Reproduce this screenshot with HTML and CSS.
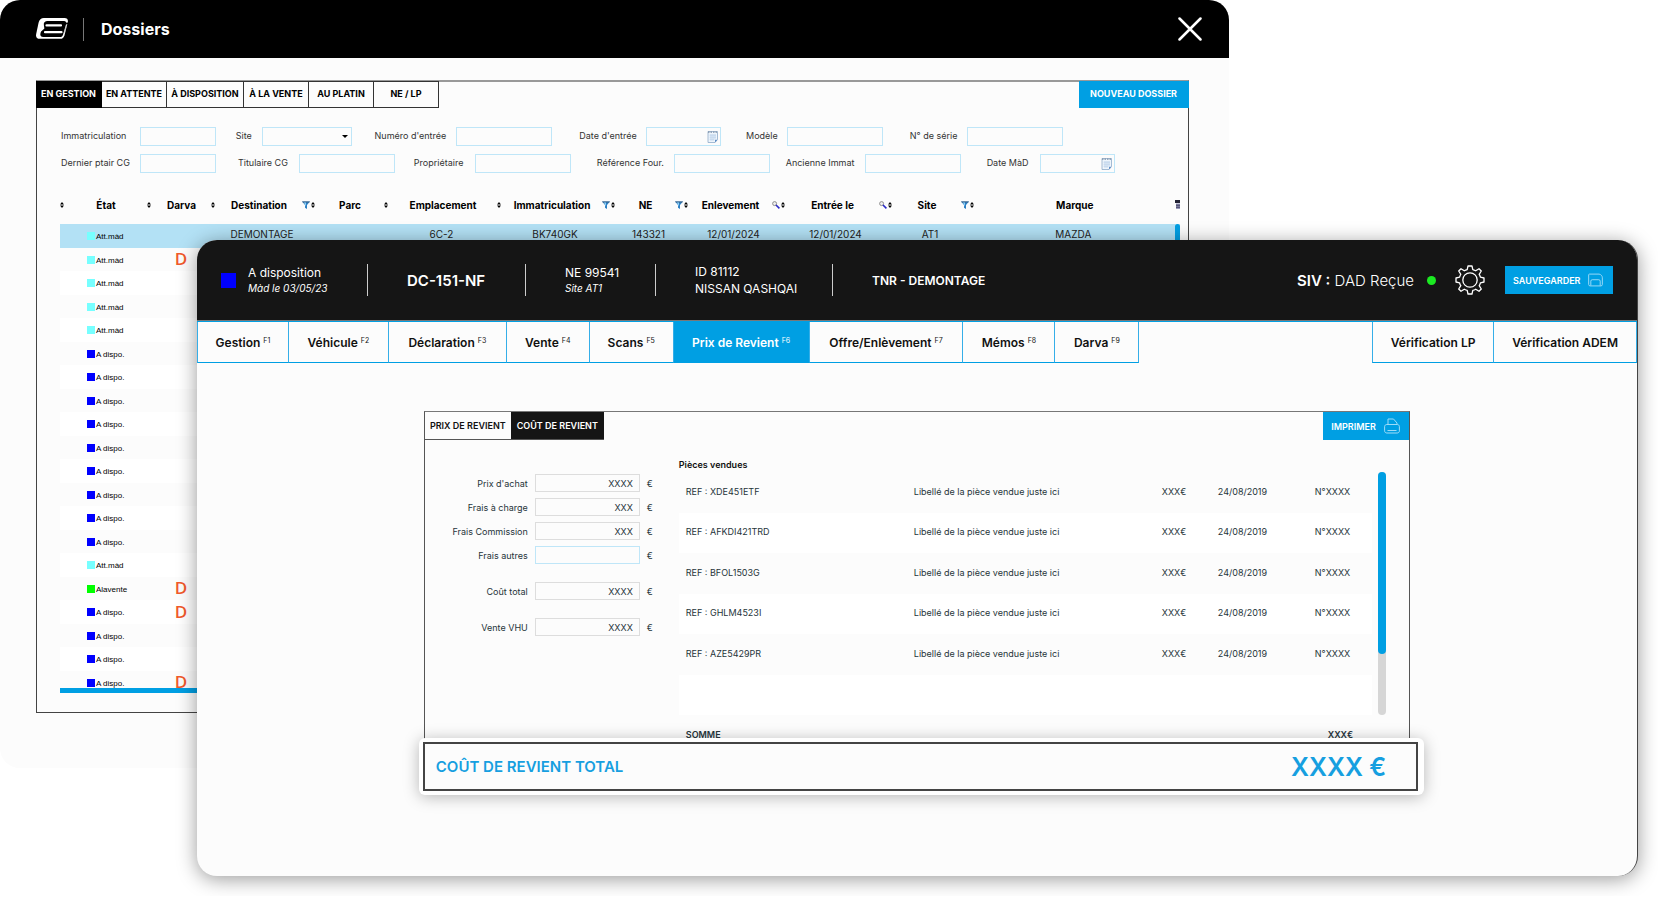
FILE: index.html
```html
<!DOCTYPE html>
<html lang="fr">
<head>
<meta charset="utf-8">
<title>Dossiers</title>
<link rel="stylesheet" href="styles.css">
</head>
<body>
<svg class="defs" aria-hidden="true">
  <symbol id="sort" viewBox="0 0 4 6"><path d="M2 0L4 2.4H0zM2 6L4 3.6H0z" fill="#000"/></symbol>
  <symbol id="funnel" viewBox="0 0 8 8"><path d="M0 .5h8L5 4v4L3 6.800V4z" fill="#2c7fc4"/><path d="M0 .5h8l-.8 1H.9z" fill="#3f5f7f"/><path d="M2 1.500h2v4z" fill="#8fd0f5"/></symbol>
  <symbol id="lens" viewBox="0 0 8 8"><circle cx="2.600" cy="2.600" r="2" fill="#eee" stroke="#777" stroke-width=".8"/><path d="M4 4l3.400 3.400" stroke="#2a2ac8" stroke-width="1.600"/></symbol>
  <symbol id="calendar" viewBox="0 0 11 13"><path d="M1 1.500h9.500v8l-2.500 3H1z" fill="#eef5fc" stroke="#8fabc9" stroke-width=".8"/><path d="M1 2.200h9.500" stroke="#7d8fa5" stroke-width="1.200" stroke-dasharray="1.500 1"/><path d="M2.500 5.200h6.500M2.500 7.200h6.500M2.500 9.200h5M4 4v7M6 4v7M8 4v5" stroke="#a5c3e2" stroke-width=".5"/><path d="M8 12.500V9.800h2.500z" fill="#5c8cc6"/></symbol>
</svg>
<main class="desktop">
  <section class="window list-window">
    <header class="list-header">
      <svg class="logo" viewBox="0 0 32 22"><path d="M8 0h20.500c2.700 0 3.800 1.500 3.300 4l-3.300 13.200c-.7 2.500-2 3.600-4.500 3.600H4C.8 20.800-.4 19 .2 16L2.500 5C3.300 1.500 5 0 8 0z" fill="#fff"/><path d="M11.500 3H27c1.800 0 3.500.5 3.800 2.300l1.200-1V6l-2 .5-3 10.200c-.5 1.700-1.500 2.300-3 2.300H7.500c-2.600 0-3.700-1.300-3-4.100.6-2.400 1.700-3.700 3.500-4.300-.9-.9-1-2.200-.6-4C8 4.200 9 3 11.500 3z" fill="#000"/><path d="M2 8l5.500-3L8.400 10.400 4 14.500z" fill="#fff"/><path d="M10.500 7.400H25M9 14.200h16.500" stroke="#fff" stroke-width="2.200" stroke-linecap="round"/><path d="M30.300 7.500l-1.800 7" stroke="#999" stroke-width=".6"/></svg>
      <span class="rule"></span>
      <h1>Dossiers</h1>
      <button class="close" aria-label="Fermer"><svg viewBox="0 0 24 24"><path d="M1.500 1.500l21 21M22.500 1.500l-21 21" stroke="#fff" stroke-width="2.500" stroke-linecap="round"/></svg></button>
    </header>
    <div class="list-panel">
      <div class="list-tabs">
        <nav class="tabs-dark">
          <button class="active">EN GESTION</button><button>EN ATTENTE</button><button class="wide">À DISPOSITION</button><button>À LA VENTE</button><button>AU PLATIN</button><button>NE / LP</button>
        </nav>
        <button class="new-file">NOUVEAU DOSSIER</button>
      </div>
      <form class="filters">
        <div class="filter-row first">
          <label for="immat">Immatriculation</label><input id="immat" class="w-s">
          <label for="site">Site</label><span class="select-box"><select id="site"><option></option></select></span>
          <label for="num">Numéro d'entrée</label><input id="num" class="w-l">
          <label for="dent">Date d'entrée</label><span class="date-box"><input id="dent"><svg><use href="#calendar"/></svg></span>
          <label for="mod">Modèle</label><input id="mod" class="w-l">
          <label for="serie">N° de série</label><input id="serie" class="w-l">
        </div>
        <div class="filter-row second">
          <label for="ptair">Dernier ptair CG</label><input id="ptair" class="w-s">
          <label for="titu">Titulaire CG</label><input id="titu" class="w-l">
          <label for="prop">Propriétaire</label><input id="prop" class="w-l">
          <label for="four">Référence Four.</label><input id="four" class="w-l">
          <label for="anc">Ancienne Immat</label><input id="anc" class="w-l">
          <label for="dmad">Date MàD</label><span class="date-box"><input id="dmad"><svg><use href="#calendar"/></svg></span>
        </div>
      </form>
      <div class="files">
        <table>
          <colgroup><col class="c-edge"><col class="c-etat"><col class="c-darva"><col class="c-dest"><col class="c-parc"><col class="c-empl"><col class="c-immat"><col class="c-ne"><col class="c-enl"><col class="c-ent"><col class="c-site"><col class="c-marq"></colgroup>
          <thead><tr>
            <th><div><svg class="sort"><use href="#sort"/></svg></div></th>
            <th><div><span>État</span><svg class="sort"><use href="#sort"/></svg></div></th>
            <th><div><span>Darva</span><svg class="sort"><use href="#sort"/></svg></div></th>
            <th><div><span>Destination</span><svg class="tool"><use href="#funnel"/></svg><svg class="sort"><use href="#sort"/></svg></div></th>
            <th><div><span>Parc</span><svg class="sort"><use href="#sort"/></svg></div></th>
            <th><div><span>Emplacement</span><svg class="sort"><use href="#sort"/></svg></div></th>
            <th><div><span>Immatriculation</span><svg class="tool"><use href="#funnel"/></svg><svg class="sort"><use href="#sort"/></svg></div></th>
            <th><div><span>NE</span><svg class="tool"><use href="#funnel"/></svg><svg class="sort"><use href="#sort"/></svg></div></th>
            <th><div><span>Enlevement</span><svg class="tool"><use href="#lens"/></svg><svg class="sort"><use href="#sort"/></svg></div></th>
            <th><div><span>Entrée le</span><svg class="tool"><use href="#lens"/></svg><svg class="sort"><use href="#sort"/></svg></div></th>
            <th><div><span>Site</span><svg class="tool"><use href="#funnel"/></svg><svg class="sort"><use href="#sort"/></svg></div></th>
            <th><div><span>Marque</span><svg class="menu" viewBox="0 0 5 9"><path d="M0 0h5v3H0z" fill="#223"/><path d="M1 3.500h4V9H1z" fill="#99b"/><path d="M1 5.200h4M1 7.200h4" stroke="#224" stroke-width=".8"/></svg></div></th>
          </tr></thead>
          <tbody>
            <tr class="selected"><td></td><td class="state wait">Att.màd</td><td></td><td>DEMONTAGE</td><td></td><td>6C-2</td><td>BK740GK</td><td>143321</td><td>12/01/2024</td><td>12/01/2024</td><td>AT1</td><td>MAZDA</td></tr>
            <tr><td></td><td class="state wait">Att.màd</td><td class="darva">D</td><td colspan="9"></td></tr>
            <tr><td></td><td class="state wait">Att.màd</td><td></td><td colspan="9"></td></tr>
            <tr><td></td><td class="state wait">Att.màd</td><td></td><td colspan="9"></td></tr>
            <tr><td></td><td class="state wait">Att.màd</td><td></td><td colspan="9"></td></tr>
            <tr><td></td><td class="state">A dispo.</td><td></td><td colspan="9"></td></tr>
            <tr><td></td><td class="state">A dispo.</td><td></td><td colspan="9"></td></tr>
            <tr><td></td><td class="state">A dispo.</td><td></td><td colspan="9"></td></tr>
            <tr><td></td><td class="state">A dispo.</td><td></td><td colspan="9"></td></tr>
            <tr><td></td><td class="state">A dispo.</td><td></td><td colspan="9"></td></tr>
            <tr><td></td><td class="state">A dispo.</td><td></td><td colspan="9"></td></tr>
            <tr><td></td><td class="state">A dispo.</td><td></td><td colspan="9"></td></tr>
            <tr><td></td><td class="state">A dispo.</td><td></td><td colspan="9"></td></tr>
            <tr><td></td><td class="state">A dispo.</td><td></td><td colspan="9"></td></tr>
            <tr><td></td><td class="state wait">Att.màd</td><td></td><td colspan="9"></td></tr>
            <tr><td></td><td class="state sale">Alavente</td><td class="darva">D</td><td colspan="9"></td></tr>
            <tr><td></td><td class="state">A dispo.</td><td class="darva">D</td><td colspan="9"></td></tr>
            <tr><td></td><td class="state">A dispo.</td><td></td><td colspan="9"></td></tr>
            <tr><td></td><td class="state">A dispo.</td><td></td><td colspan="9"></td></tr>
            <tr><td></td><td class="state">A dispo.</td><td class="darva">D</td><td colspan="9"></td></tr>
          </tbody>
        </table>
        <span class="files-scroll"></span>
      </div>
    </div>
  </section>

  <section class="window file-window">
    <header class="file-header">
      <span class="status-square"></span>
      <div class="info status"><p>A disposition</p><p class="sub">Màd le 03/05/23</p></div>
      <div class="info plate"><strong>DC-151-NF</strong></div>
      <div class="info entry"><p>NE 99541</p><p class="sub">Site AT1</p></div>
      <div class="info car"><p>ID 81112</p><p>NISSAN QASHQAI</p></div>
      <div class="info kind"><b>TNR - DEMONTAGE</b></div>
      <p class="siv"><b>SIV :</b> DAD Reçue</p>
      <span class="dot"></span>
      <button class="gear" aria-label="Réglages"><svg viewBox="0 0 30 30" fill="none" stroke="#fff" stroke-width="1.300" stroke-linejoin="round"><circle cx="15" cy="15" r="7.200"/><path d="M13 1h4l.8 3.600c1 .2 2 .7 2.900 1.200L24 3.700 26.300 6l-2.100 3.300c.6.900 1 1.900 1.200 2.900L29 13v4l-3.600.8c-.2 1-.7 2-1.200 2.900l2.100 3.300-2.300 2.300-3.300-2.100c-.9.600-1.900 1-2.900 1.200L17 29h-4l-.8-3.600c-1-.2-2-.7-2.900-1.200L6 26.300 3.700 24l2.100-3.300c-.6-.9-1-1.900-1.200-2.900L1 17v-4l3.600-.8c.2-1 .7-2 1.200-2.900L3.700 6 6 3.700l3.300 2.100c.9-.6 1.900-1 2.900-1.200z"/></svg></button>
      <button class="save">SAUVEGARDER <svg viewBox="0 0 16 14" fill="none" stroke="#9fdcf8"><path d="M1.500.7h10.300c2 .3 3.500 2 3.500 4v7.100c0 .9-.6 1.500-1.500 1.500H2.200c-.9 0-1.500-.6-1.500-1.500V1.500C.7 1 1 .7 1.500.7z"/><path d="M3 13V8.200c0-.9.600-1.500 1.500-1.500h7c.9 0 1.500.6 1.500 1.500V13"/></svg></button>
    </header>
    <nav class="file-tabs">
      <button>Gestion <sup>F1</sup></button><button>Véhicule <sup>F2</sup></button><button>Déclaration <sup>F3</sup></button><button>Vente <sup>F4</sup></button><button>Scans <sup>F5</sup></button><button class="active">Prix de Revient <sup>F6</sup></button><button>Offre/Enlèvement <sup>F7</sup></button><button>Mémos <sup>F8</sup></button><button>Darva <sup>F9</sup></button><span></span><button class="side">Vérification LP</button><button class="side">Vérification ADEM</button>
    </nav>
    <div class="file-body">
      <div class="cost-panel">
        <div class="cost-tabs">
          <button>PRIX DE REVIENT</button><button class="active">COÛT DE REVIENT</button>
          <button class="print">IMPRIMER <svg viewBox="0 0 16 16" fill="none" stroke="#9fdcf8"><path d="M4 6V1h5.500L13 5v1M2.800 6.500h10.400c1.300 0 2.200.9 2.200 2.200v4.100c0 1.300-.9 2.200-2.200 2.200H2.800C1.500 15 .6 14.100.6 12.800V8.700c0-1.300.9-2.200 2.200-2.200zM3.500 12.500h9"/></svg></button>
        </div>
        <div class="cost-content">
          <form class="costs">
            <label for="achat">Prix d'achat</label><input id="achat" value="XXXX"><span>€</span>
            <label for="charge">Frais à charge</label><input id="charge" value="XXX"><span>€</span>
            <label for="comm">Frais Commission</label><input id="comm" value="XXX"><span>€</span>
            <label for="autres">Frais autres</label><input id="autres" class="editable"><span>€</span>
            <i></i>
            <label for="total">Coût total</label><input id="total" value="XXXX"><span>€</span>
            <i></i>
            <label for="vhu">Vente VHU</label><input id="vhu" value="XXXX"><span>€</span>
          </form>
          <div class="parts">
            <h2>Pièces vendues</h2>
            <div class="parts-list">
              <table>
                <colgroup><col class="p-ref"><col class="p-name"><col class="p-price"><col class="p-date"><col class="p-num"></colgroup>
                <tbody>
                  <tr><td>REF : XDE451ETF</td><td>Libellé de la pièce vendue juste ici</td><td>XXX€</td><td>24/08/2019</td><td>N°XXXX</td></tr>
                  <tr><td>REF : AFKDI421TRD</td><td>Libellé de la pièce vendue juste ici</td><td>XXX€</td><td>24/08/2019</td><td>N°XXXX</td></tr>
                  <tr><td>REF : BFOL1503G</td><td>Libellé de la pièce vendue juste ici</td><td>XXX€</td><td>24/08/2019</td><td>N°XXXX</td></tr>
                  <tr><td>REF : GHLM4523I</td><td>Libellé de la pièce vendue juste ici</td><td>XXX€</td><td>24/08/2019</td><td>N°XXXX</td></tr>
                  <tr><td>REF : AZE5429PR</td><td>Libellé de la pièce vendue juste ici</td><td>XXX€</td><td>24/08/2019</td><td>N°XXXX</td></tr>
                  <tr><td colspan="5"></td></tr>
                </tbody>
              </table>
              <div class="track"><div class="thumb"></div></div>
            </div>
            <p class="sum"><b>SOMME</b><b>XXX€</b></p>
          </div>
        </div>
      </div>
      <div class="total-card"><div class="total-box"><span>COÛT DE REVIENT TOTAL</span><strong>XXXX €</strong></div></div>
    </div>
  </section>
</main>
</body>
</html>
```
FILE: styles.css
```css
* { box-sizing: border-box; }
body { margin: 0; background: #fff; color: #111; font-family: Inter, "Open Sans", sans-serif; font-size: 9px; }
h1, h2, p { margin: 0; }
button { font: inherit; color: inherit; background: none; border: 0; padding: 0; margin: 0; cursor: pointer; white-space: nowrap; }
input, select { font: inherit; color: inherit; background: #fcfcfc; border: 1px solid #bfe6f8; border-radius: 0; margin: 0; padding: 0 8px; min-width: 0; height: 19px; outline: 0; }
svg { display: block; flex: none; }
.defs { position: absolute; width: 0; height: 0; }

.desktop { display: grid; }
.window { grid-area: 1 / 1; isolation: isolate; background: #fcfcfc; border-radius: 20px; overflow: hidden; }

/* File list window */
.list-window { width: 74.1%; align-self: start; padding-bottom: 55px; }
.list-header { display: flex; align-items: center; height: 58px; padding: 0 27px 0 36px; background: #000; color: #fff; }
.logo { width: 32px; height: 22px; }
.rule { width: 1px; height: 23px; margin: 0 17px 0 15px; background: #777; }
.list-header h1 { font-size: 16px; font-weight: 700; }
.close { margin-left: auto; }
.close svg { width: 24px; height: 24px; }

.list-panel { margin: 22px 40px 0 36px; border: 1px solid #444; border-top: 2px solid #999; padding-bottom: 19px; }
.list-tabs { display: flex; justify-content: space-between; height: 27px; margin: -1px -1px 0; }
.tabs-dark { display: flex; }
.tabs-dark button { width: 65px; padding-bottom: 2px; border: 1px solid #333; border-left: 0; font-size: 9px; font-weight: 700; color: #000; }
.tabs-dark .wide { width: 77px; }
.tabs-dark .active { width: 66px; background: #000; color: #fff; border-color: #000; }
.new-file { width: 110px; padding-bottom: 2px; background: #009fe3; color: #fff; font-weight: 700; }

.filters { display: grid; gap: 8px; margin: 19px 8px 0 24px; font-size: 9px; color: #333; }
.filter-row { display: grid; align-items: center; white-space: nowrap; }
.filter-row label { padding-bottom: 2px; }
.first { grid-template-columns: 79fr 96fr 26fr 113fr 82fr 123fr 67fr 100fr 41fr 123fr 57fr 95fr 117fr; }
.second { grid-template-columns: 79fr 98fr 61fr 115fr 61fr 122fr 77fr 112fr 79fr 122fr 53fr 76fr 64fr; }
.w-s { width: 76px; }
.w-l { width: 96px; }
.select-box { position: relative; width: 90px; display: flex; }
.select-box select { width: 100%; appearance: none; }
.select-box::after { content: ""; position: absolute; right: 4px; top: 8px; border: 3px solid transparent; border-top-color: #000; border-bottom: 0; }
.date-box { display: flex; align-items: center; width: 75px; height: 19px; border: 1px solid #bfe6f8; padding-right: 2px; }
.date-box input { flex: 1; height: 17px; border: 0; }
.date-box svg { width: 11px; height: 13px; }

.files { position: relative; height: 505px; margin: 15px 8px 0 23px; overflow: hidden; border-bottom: 5px solid #009fe3; }
.files table { width: 100%; height: 506px; border-collapse: collapse; table-layout: fixed; }
.files th, .files td { padding: 0; text-align: center; line-height: 12px; }
.files thead tr { height: 36px; }
.files tbody tr { height: 23px; }
.files th { padding-bottom: 3px; font-size: 10px; font-weight: 700; color: #000; }
.files th div { display: flex; align-items: center; }
.files th span { flex: 1; white-space: nowrap; }
.sort { width: 4px; height: 6px; margin-right: 1px; }
.tool { width: 8px; height: 8px; margin-right: 1px; }
.menu { width: 5px; height: 9px; }
.files td { font-size: 10px; color: #222; padding: 0 8px 4px 0; white-space: nowrap; }
.files tbody tr:nth-child(odd) { background: #fff; }
.files tbody tr.selected { background: #b3e1f5; }
.files .state { font: 8px/12px "Liberation Sans", sans-serif; color: #000; text-align: left; padding: 3px 0 0 22px; }
.state::before { content: ""; display: inline-block; width: 8px; height: 8px; margin-right: 1px; vertical-align: -1px; background: #00f; }
.wait::before { background: #7ff; }
.sale::before { background: #0f0; }
.files .darva { font-family: "Open Sans", sans-serif; font-size: 17px; font-weight: 600; color: #f15a2b; padding: 0 6px 0 0; }
.files-scroll { position: absolute; right: 0; top: 36px; bottom: 0; width: 5px; background: #009fe3; border-radius: 3px 3px 0 0; }
.c-edge { width: 5px; } .c-etat { width: 87px; } .c-darva { width: 64px; } .c-dest { width: 100px; }
.c-parc { width: 73px; } .c-empl { width: 113px; } .c-immat { width: 114px; } .c-ne { width: 73px; }
.c-enl { width: 97px; } .c-ent { width: 107px; } .c-site { width: 82px; }

/* File detail window */
.file-window { margin: 240px 20px 20px 197px; border-right: 1px solid #444; padding-bottom: 81px; box-shadow: 0 3px 20px rgba(0, 0, 0, .4); }
.file-header { display: flex; align-items: center; height: 81px; padding: 0 24px; background: #151515; color: #fff; border-bottom: 1px solid #777; }
.status-square { width: 15px; height: 15px; margin-right: 12px; background: #00f; }
.info { display: flex; flex-direction: column; justify-content: center; height: 32px; font-size: 12px; line-height: 17px; white-space: nowrap; padding-right: 39px; margin-right: 39px; border-right: 1px solid #ccc; }
.info .sub { font-size: 10px; line-height: 15px; font-style: italic; }
.status { width: 120px; }
.plate { width: 119px; font-size: 15px; }
.plate strong, .kind b, .siv b { font-weight: 600; }
.entry { width: 91px; }
.car { width: 138px; }
.kind { border: 0; padding: 0; margin: 0; }
.siv { margin-left: auto; font-size: 15px; font-weight: 300; }
.dot { width: 9px; height: 9px; margin: 0 19px 0 13px; border-radius: 50%; background: #1bea22; }
.gear svg { width: 30px; height: 30px; }
.save { display: flex; align-items: center; justify-content: space-between; width: 108px; height: 28px; margin-left: 20px; padding: 0 10px 0 8px; background: #009fe3; font-size: 9px; font-weight: 600; }
.save svg { width: 15px; height: 14px; }

.file-tabs { display: grid; grid-template-columns: 92fr 100fr 118fr 83fr 84fr 136fr 154fr 92fr 84fr 233fr 122fr 143fr; height: 42px; border-top: 1px solid #009fe3; }
.file-tabs button { border-right: 1px solid #35aee8; border-bottom: 1px solid #009fe3; font-size: 12px; font-weight: 600; }
.file-tabs button:first-child, .file-tabs span + .side { border-left: 1px solid #35aee8; }
.file-tabs sup { font-size: 7px; font-weight: 400; line-height: 0; vertical-align: 4px; }
.file-tabs .active { background: #009fe3; color: #fff; }

.file-body { padding: 48px 15.75% 0; }
.cost-panel { border: 1px solid #555; border-top: 1px solid #777; border-bottom: 0; }
.cost-tabs { display: flex; height: 28px; font-size: 9px; font-weight: 600; }
.cost-tabs button { width: 86px; border-bottom: 1px solid #555; }
.cost-tabs .active { width: 93px; background: #151515; color: #fff; }
.cost-tabs .print { display: flex; align-items: center; justify-content: space-between; width: 86px; margin-left: auto; padding: 0 9px 0 8px; border: 0; background: #009fe3; color: #fff; }
.print svg { width: 16px; height: 16px; }
.cost-content { display: flex; gap: 22px; padding-right: 23px; }
.costs { display: grid; grid-template-columns: 103px 105px 10px; gap: 6px 7px; align-content: start; align-items: center; margin: 34px 0 0; color: #26343a; font-size: 9px; }
.costs label { text-align: right; white-space: nowrap; }
.costs input { height: 18px; padding-right: 6px; text-align: right; border-color: #ddd; }
.costs .editable { border-color: #bfe6f8; }
.costs i { grid-column: 1 / -1; height: 6px; }
.parts { flex: 1; padding-top: 18px; color: #26343a; }
.parts h2 { font-size: 9px; line-height: 14px; font-weight: 600; color: #111; }
.parts-list { display: flex; gap: 6px; }
.parts table { flex: 1; height: 243px; table-layout: fixed; border-collapse: collapse; font-size: 9px; }
.parts tr { height: 40px; }
.parts td { padding: 0 0 2px; white-space: nowrap; }
.parts td:first-child { padding-left: 7px; }
.parts tr:nth-child(even) { background: #fff; }
.p-ref { width: 235px; } .p-name { width: 248px; } .p-price { width: 56px; } .p-date { width: 97px; }
.track { width: 8px; background: #d6d6d6; border-radius: 4px; }
.thumb { height: 75%; background: #009fe3; border-radius: 4px; }
.sum { display: flex; justify-content: space-between; padding: 14px 33px 0 7px; line-height: 12px; font-size: 9px; }
.sum b { font-weight: 600; }
.total-card { position: relative; margin: -3px -14px 0 -5px; padding: 4px 6px 4px 4px; background: #fff; border-radius: 6px; box-shadow: 0 2px 16px rgba(0, 0, 0, .28); }
.total-box { display: flex; align-items: center; justify-content: space-between; height: 49px; padding: 0 30px 0 11px; border: 2px solid #444; background: #fcfcfc; color: #169fe0; font-size: 15px; font-weight: 600; }
.total-box strong { font-size: 25px; font-weight: 600; }
```
